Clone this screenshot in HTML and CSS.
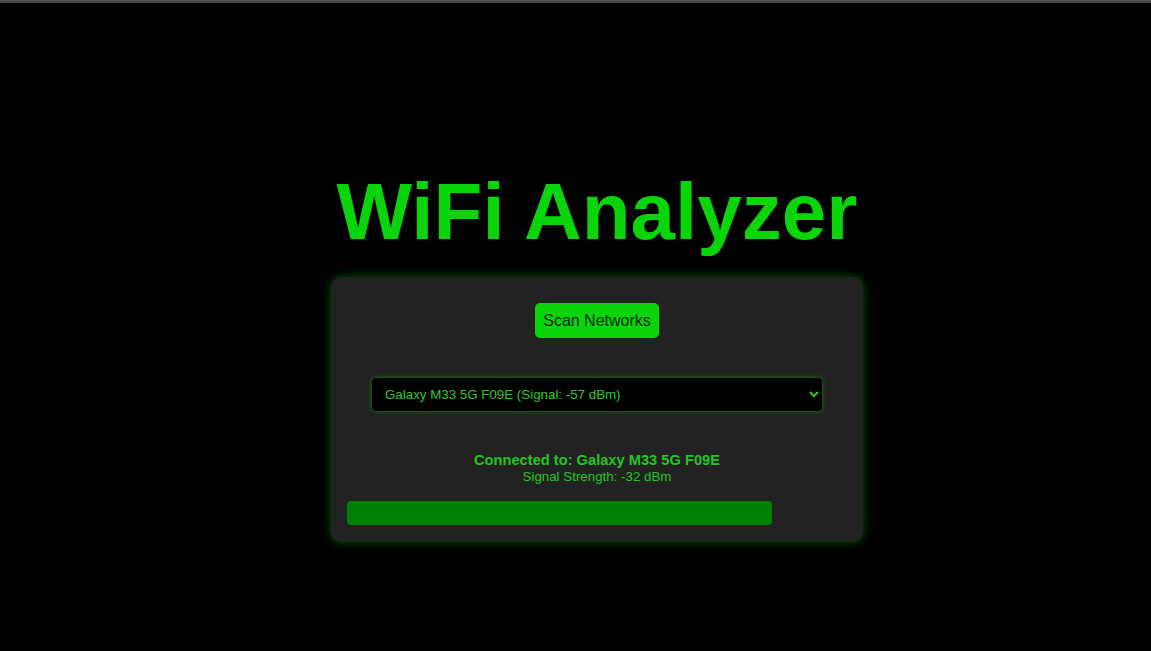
FILE: index.html
```html
<!DOCTYPE html>
<html lang="en">
<head>
<meta charset="utf-8">
<title>WiFi Analyzer</title>
<link rel="stylesheet" href="styles.css">
</head>
<body>
<div class="topline"></div>
<main class="page">
  <h1 class="title">WiFi Analyzer</h1>
  <section class="card">
    <button class="scan-btn" type="button">Scan Networks</button>
    <select class="network-select">
      <option>Galaxy M33 5G F09E (Signal: -57 dBm)</option>
    </select>
    <div class="status">
      <div class="connected">Connected to: Galaxy M33 5G F09E</div>
      <div class="strength">Signal Strength: -32 dBm</div>
    </div>
    <div class="meter"><div class="meter-fill" style="width:85%"></div></div>
  </section>
</main>
</body>
</html>
```
FILE: styles.css
```css
* { box-sizing: border-box; }
html, body {
  margin: 0;
  padding: 0;
  background: #000;
  font-family: "Liberation Sans", Arial, sans-serif;
  height: 100%;
  overflow: hidden;
}
.topline {
  height: 3px;
  background: linear-gradient(#5a5a5a, #3a3a3a);
}
.page {
  display: flex;
  flex-direction: column;
  align-items: center;
  padding-left: 43px;
  padding-top: 163px;
}
.title {
  margin: 0;
  font-size: 80px;
  font-weight: bold;
  color: #0ad40a;
  line-height: 92px;
}
.card {
  margin-top: 19px;
  width: 532px;
  background: #222;
  border-radius: 10px;
  box-shadow: 0 0 10px rgba(0, 200, 0, 0.45);
  padding: 26px 16px 17px;
  display: flex;
  flex-direction: column;
  align-items: center;
}
.scan-btn {
  font-family: "Liberation Sans", Arial, sans-serif;
  font-size: 16px;
  height: 35px;
  padding: 0 8px;
  background: #0ad40a;
  color: #0b2a0b;
  border: none;
  border-radius: 5px;
}
.network-select {
  margin-top: 39px;
  width: 452px;
  height: 35px;
  padding: 0 9px;
  font-family: "Liberation Sans", Arial, sans-serif;
  font-size: 13.333px;
  background: #000;
  color: #2ec92e;
  border: 1px solid #1f4a1f;
  border-radius: 5px;
  box-shadow: 0 0 4px rgba(0, 200, 0, 0.35);
}
.status {
  margin-top: 40px;
  text-align: center;
  color: #22c522;
}
.connected {
  font-weight: bold;
  font-size: 14.667px;
  line-height: 17px;
}
.strength {
  font-size: 13.333px;
  line-height: 15px;
}
.meter {
  margin-top: 17px;
  width: 100%;
  height: 24px;
}
.meter-fill {
  height: 100%;
  background: #008000;
  border-radius: 4px;
}
```
